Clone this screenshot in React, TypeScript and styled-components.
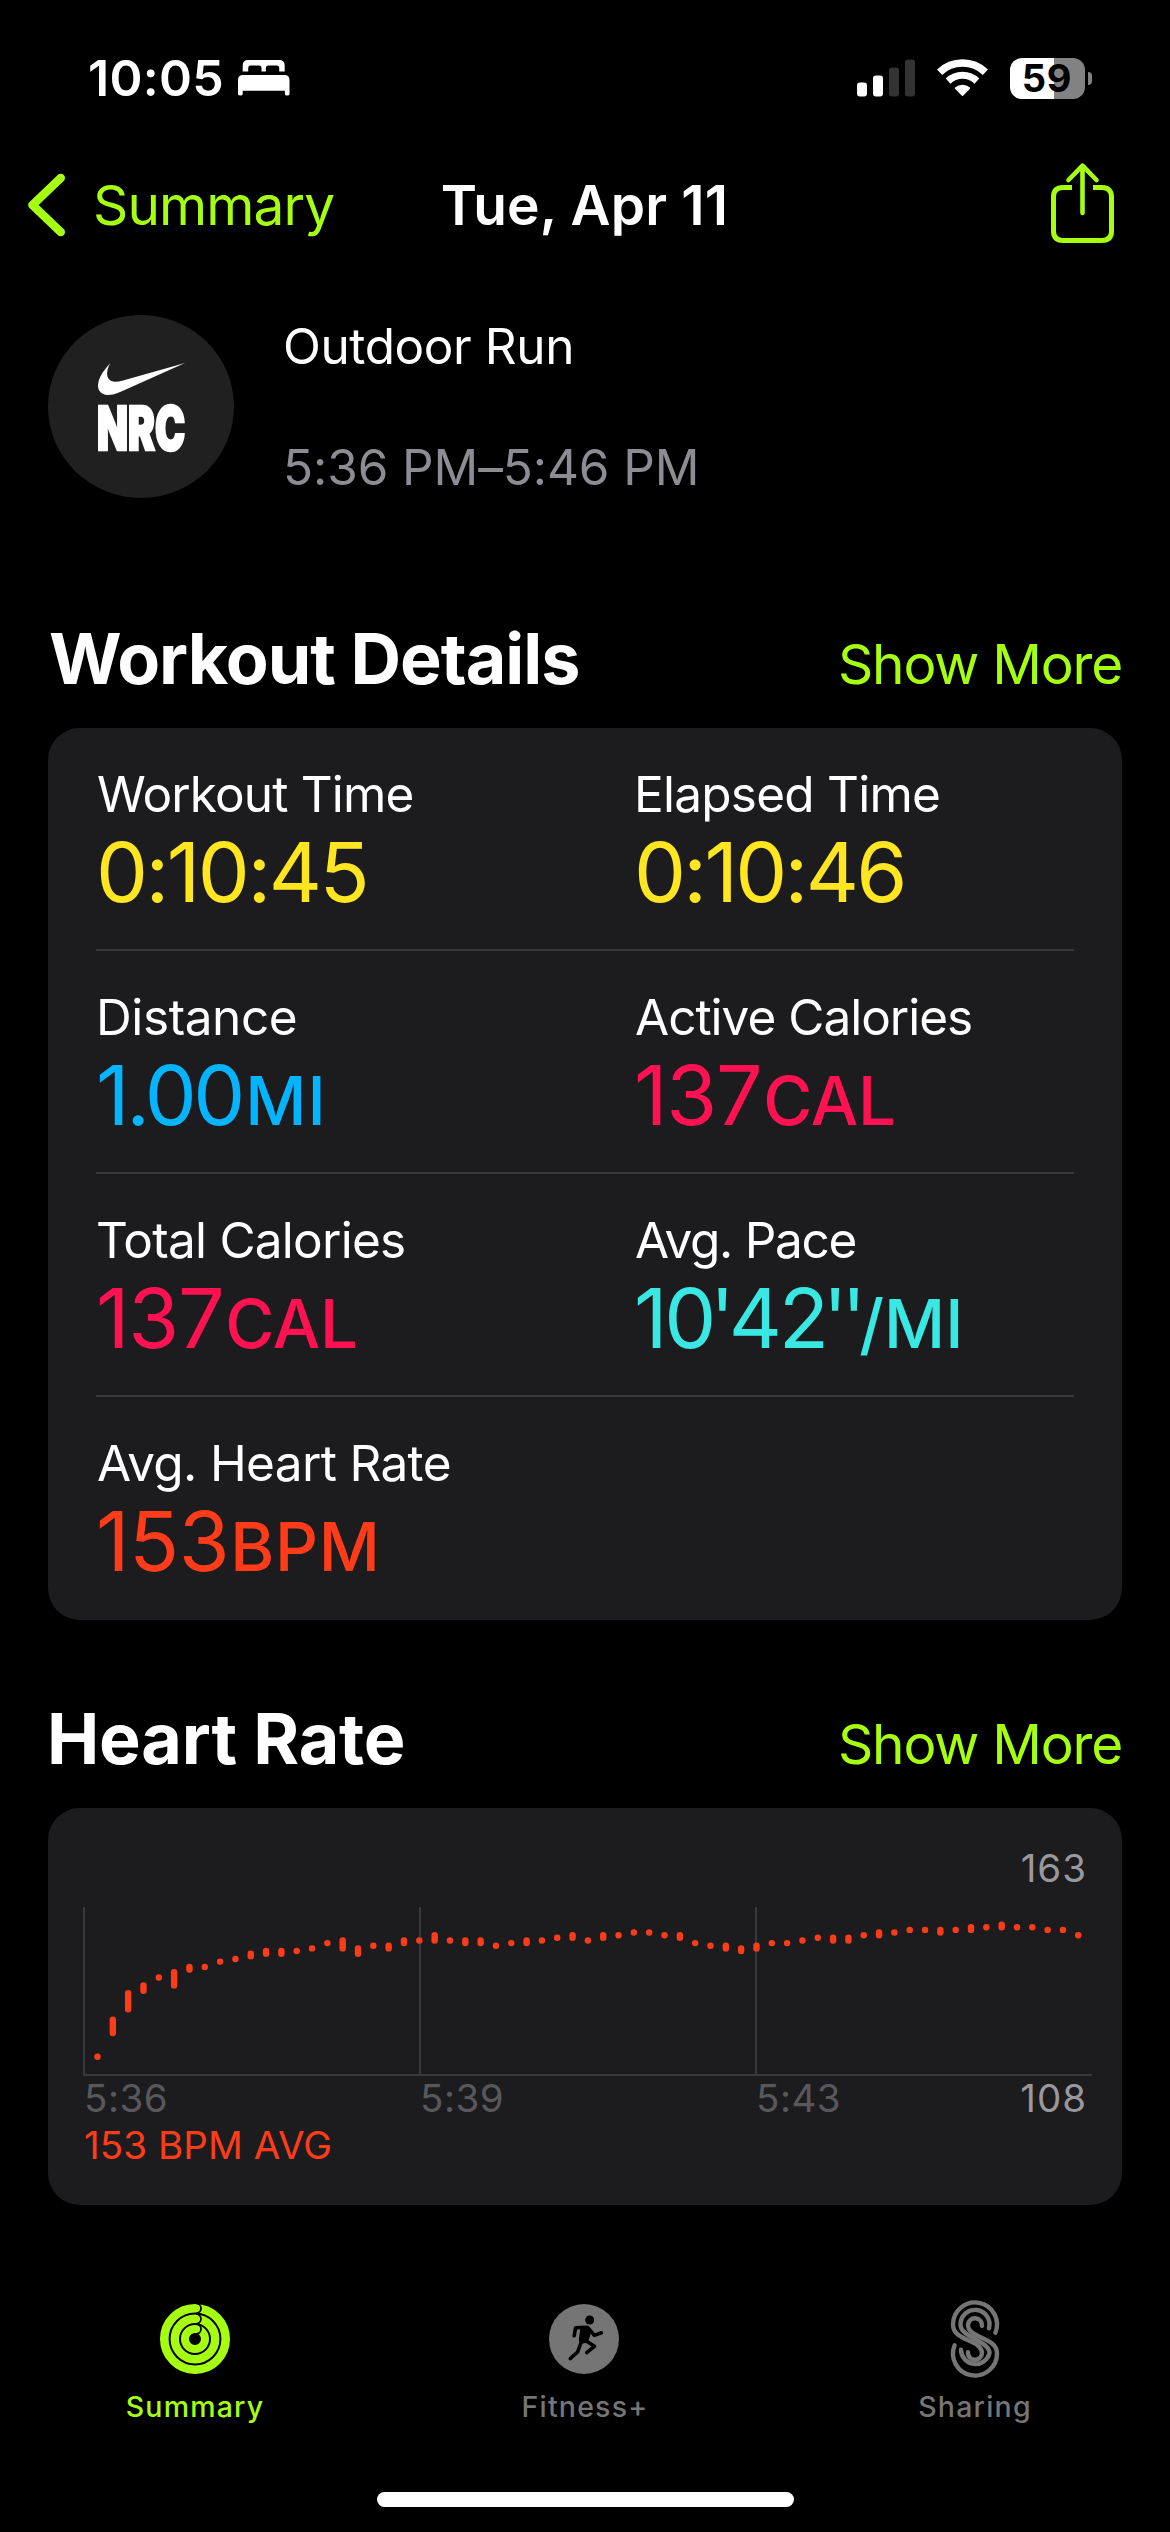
import React from "react";
import styled, { createGlobalStyle } from "styled-components";

const color = {
  accent: "#a6ff10",
  card: "#1c1c1e",
  line: "#39393b",
  yellow: "#ffe620",
  blue: "#04b4ff",
  pink: "#ff1152",
  cyan: "#39e8e2",
  red: "#ff3c1a",
  inactive: "#757575",
};

const GlobalStyle = createGlobalStyle`
  * { box-sizing: border-box; }
  body {
    margin: 0;
    background: #000;
    color: #fff;
    font-family: Inter, "Liberation Sans", sans-serif;
  }
  svg { display: block; flex: none; overflow: visible; }
`;

const Screen = styled.div`
  display: flex;
  flex-direction: column;
  width: 1170px;
  height: 2532px;
  overflow: hidden;
  background: #000;
  white-space: nowrap;
`;

/* Status bar */

const StatusBar = styled.header`
  display: flex;
  align-items: center;
  height: 156px;
  padding: 0 78px 0 88px;
`;

const Clock = styled.span`
  width: 150px;
  font-size: 50px;
  font-weight: 600;
  letter-spacing: 0.3px;
`;

const StatusIcons = styled.div`
  display: flex;
  align-items: center;
  gap: 22px;
  margin-left: auto;
`;

const Battery = styled.div`
  display: flex;
  align-items: center;
  gap: 3px;
`;

const BatteryBody = styled.div<{ $level: number }>`
  width: 75px;
  height: 41px;
  border-radius: 12px;
  background: linear-gradient(
    to right,
    #fff ${(p) => p.$level}%,
    #828282 ${(p) => p.$level}%
  );
  color: #000;
  font-size: 38px;
  font-weight: 650;
  line-height: 41px;
  letter-spacing: 0.8px;
  text-align: center;
`;

const BatteryTip = styled.div`
  width: 4.5px;
  height: 13px;
  border-radius: 0 6px 6px 0;
  background: #828282;
`;

/* Navigation bar */

const NavBar = styled.nav`
  display: grid;
  grid-template-columns: 1fr auto 1fr;
  align-items: center;
  height: 98px;
  padding: 0 56px 0 27px;
`;

const BackButton = styled.a`
  display: flex;
  align-items: center;
  gap: 28px;
  color: ${color.accent};
  font-size: 55px;
  letter-spacing: -0.9px;
`;

const NavTitle = styled.h1`
  margin: 0 0 0 28px;
  font-size: 55px;
  font-weight: 600;
  letter-spacing: 0.2px;
`;

const ShareButton = styled.a`
  justify-self: end;
`;

/* Workout summary */

const WorkoutHeader = styled.section`
  display: flex;
  gap: 49px;
  height: 183px;
  margin-top: 61px;
  padding-left: 48px;
`;

const Badge = styled.div`
  display: flex;
  flex-direction: column;
  align-items: center;
  gap: 10px;
  width: 186px;
  height: 183px;
  padding-top: 48px;
  border-radius: 50%;
  background: #202020;
`;

const WorkoutInfo = styled.div`
  display: flex;
  flex-direction: column;
  gap: 61px;
  padding-top: 1px;
  font-size: 49.5px;
  line-height: 60px;
`;

const WorkoutName = styled.span`
  letter-spacing: -0.4px;
`;

const WorkoutPeriod = styled.span`
  color: #8d8c92;
  letter-spacing: -0.1px;
`;

/* Sections */

const Section = styled.section<{ $gap: number }>`
  margin-top: ${(p) => p.$gap}px;
  padding: 0 48px;
`;

const SectionHead = styled.div`
  display: flex;
  align-items: baseline;
  justify-content: space-between;
  height: 111.5px;
`;

const SectionTitle = styled.h2<{ $tracking: number; $indent: number }>`
  margin: 0 0 0 ${(p) => p.$indent}px;
  font-size: 70px;
  font-weight: 700;
  line-height: 84px;
  letter-spacing: ${(p) => p.$tracking}px;
`;

const ShowMore = styled.a`
  color: ${color.accent};
  font-size: 55px;
  letter-spacing: -1.2px;
`;

const Card = styled.div`
  border-radius: 32px;
  background: ${color.card};
`;

const DetailsCard = styled(Card)`
  padding: 0 48px;
`;

const MetricRow = styled.div`
  display: grid;
  grid-template-columns: 538px 1fr;
  height: 223px;
  padding-top: 36px;
  border-bottom: 2px solid ${color.line};

  &:last-child {
    border-bottom: 0;
  }
`;

const MetricLabel = styled.div<{ $tracking: number; $indent: number }>`
  margin-left: ${(p) => p.$indent}px;
  font-size: 49.5px;
  line-height: 60px;
  letter-spacing: ${(p) => p.$tracking}px;
`;

const MetricValue = styled.div<{ $color: string; $tracking: number }>`
  height: 90px;
  margin-top: 3px;
  color: ${(p) => p.$color};
  font-size: 82.5px;
  font-weight: 430;
  line-height: 90px;
  letter-spacing: ${(p) => p.$tracking}px;
`;

const Unit = styled.span<{ $gap: number; $tracking: number }>`
  margin-left: ${(p) => p.$gap}px;
  font-size: 67px;
  font-weight: 480;
  letter-spacing: ${(p) => p.$tracking}px;
`;

const Prime = styled.span`
  margin: 0 0 0 -3px;
  letter-spacing: -6px;
`;

/* Heart rate chart */

const ChartCard = styled(Card)`
  height: 397px;
  padding: 37px 30px 0 36px;
  font-size: 38.5px;
  line-height: 46px;
`;

const ChartMax = styled.div`
  margin-bottom: 16px;
  padding-right: 5px;
  color: #98989d;
  text-align: right;
  letter-spacing: 1px;
`;

const AxisLabels = styled.div`
  display: grid;
  grid-template-columns: 336px 336px 1fr auto;
  padding-right: 5px;
`;

const TimeTick = styled.span`
  color: #58585b;
  letter-spacing: 0.5px;
`;

const ChartMin = styled.span`
  color: #98989d;
  letter-spacing: 1px;
`;

const ChartAverage = styled.div`
  margin-top: 1px;
  color: ${color.red};
  letter-spacing: 0.1px;
`;

/* Tab bar */

const TabBar = styled.nav`
  display: grid;
  grid-template-columns: repeat(3, 1fr);
  margin-top: 95px;
`;

const Tab = styled.a<{ $active?: boolean }>`
  display: flex;
  flex-direction: column;
  align-items: center;
  gap: 11px;
  color: ${(p) => (p.$active ? color.accent : color.inactive)};
  font-size: 28.5px;
  font-weight: 500;
  line-height: 36px;
  letter-spacing: 1.2px;
`;

const HomeIndicator = styled.div`
  width: 417px;
  height: 15px;
  margin: 67px auto 0;
  border-radius: 8px;
  background: #fff;
`;

/* Icons */

const BedIcon = () => (
  <svg width="52" height="36" viewBox="0 0 52 36" fill="#fff">
    <path d="M4.7 11.5V5.5Q4.7 0 10.2 0H41.2Q46.7 0 46.7 5.5V11.5H41.2V8.2Q41.2 5.6 38.6 5.6H30.4Q27.9 5.6 27.9 8.2V11.5H23.5V8.2Q23.5 5.6 21 5.6H12.8Q10.2 5.6 10.2 8.2V11.5Z" />
    <path d="M0 20Q0 15 5 15H46.5Q51.5 15 51.5 20V34Q51.5 35.5 49.2 35.5T46.9 34V30.8H4.7V34Q4.7 35.5 2.35 35.5T0 34Z" />
  </svg>
);

const SignalIcon = () => (
  <svg width="58" height="38" viewBox="0 0 58 38">
    <rect x="0" y="23.5" width="10" height="14" rx="3" fill="#fff" />
    <rect x="16" y="16.5" width="10" height="21" rx="3" fill="#fff" />
    <rect x="32" y="8.5" width="10" height="29" rx="3" fill="#333" />
    <rect x="48" y="0.5" width="10" height="37" rx="3" fill="#333" />
  </svg>
);

const WifiIcon = () => (
  <svg width="51" height="38" viewBox="0 0 51 38" fill="none" stroke="#fff">
    <path d="M2.6 13.2A33.2 33.2 0 0 1 48.4 13.2" strokeWidth="7.4" />
    <path d="M11.1 22.1A20.8 20.8 0 0 1 39.9 22.1" strokeWidth="7" />
    <path
      d="M25.5 36.2L18.6 29.2A10.6 10.6 0 0 1 32.4 29.2Z"
      fill="#fff"
      strokeWidth="1.6"
      strokeLinejoin="round"
    />
  </svg>
);

const ChevronIcon = () => (
  <svg width="38" height="64" viewBox="0 0 38 64" fill="none">
    <path
      d="M33.7 5L5.5 32L33.7 59"
      stroke={color.accent}
      strokeWidth="8.6"
      strokeLinecap="round"
      strokeLinejoin="round"
    />
  </svg>
);

const ShareIcon = () => (
  <svg width="64" height="84" viewBox="0 0 64 84" fill="none" stroke={color.accent}>
    <path
      d="M22 24.6H13Q3.5 24.6 3.5 34V68Q3.5 77.4 13 77.4H52Q61.5 77.4 61.5 68V34Q61.5 24.6 52 24.6H43"
      strokeWidth="5"
    />
    <path
      d="M32.5 3V50M18.5 17L32.5 2.6L46.5 17"
      strokeWidth="4.6"
      strokeLinecap="round"
      strokeLinejoin="round"
    />
  </svg>
);

const Swoosh = () => (
  <svg width="87" height="32" viewBox="0 7.8 24 8.4" preserveAspectRatio="none" fill="#fff">
    <path d="M24 7.8L6.442 15.276c-1.456.616-2.679.925-3.668.925-1.12 0-1.933-.392-2.437-1.177-.317-.504-.41-1.143-.28-1.918.13-.775.476-1.6 1.036-2.478.467-.71 1.232-1.643 2.297-2.8a6.122 6.122 0 00-.784 1.848c-.28 1.195-.028 2.072.756 2.632.373.261.886.392 1.54.392.522 0 1.11-.084 1.764-.252L24 7.8z" />
  </svg>
);

const ClubMark = () => (
  <svg width="88" height="46" viewBox="0 0 88 46">
    <text
      x="0"
      y="44.5"
      fill="#fff"
      stroke="#fff"
      strokeWidth="2.6"
      fontFamily="Inter, sans-serif"
      fontWeight="900"
      fontSize="60"
      textLength="88"
      lengthAdjust="spacingAndGlyphs"
    >
      NRC
    </text>
  </svg>
);

const rings = [
  { r: 30.7, w: 8.6 },
  { r: 20.2, w: 8.4 },
  { r: 10, w: 8 },
];

const RingsIcon = () => (
  <svg width="78" height="78" viewBox="-39 -39 78 78" fill="none">
    {rings.map(({ r, w }) => (
      <circle key={r} r={r} stroke={color.accent} strokeWidth={w} />
    ))}
    {rings.map(({ r }) => (
      <path
        key={r}
        d={`M1 ${-r - 5}A5 5 0 0 1 1 ${-r + 5}`}
        stroke="#000"
        strokeWidth="1.8"
      />
    ))}
  </svg>
);

const RunnerIcon = () => (
  <svg width="78" height="78" viewBox="-38 -39 78 78" fill="none">
    <circle r="35" fill={color.inactive} />
    <g stroke="#000" strokeWidth="3.6" strokeLinecap="round" strokeLinejoin="round">
      <circle cx="5.7" cy="-19" r="4.5" fill="#000" stroke="none" />
      <path d="M-9.8 -3.3L-8.4 -11.2L3 -11.6" />
      <path d="M4.5 -10.5L10.4 -3.6L17.4 -6.2" />
      <path d="M-1.8 -10.5L3.6 -11.2L5.4 -7.5L2.6 2L-2.6 3L-3.4 1Z" fill="#000" />
      <path d="M1 1.2L10.6 7.2L2.8 13.6" />
      <path d="M-2.6 2.5L-6.4 13L-13.8 19.6" />
    </g>
  </svg>
);

const SharingIcon = () => (
  <svg
    width="78"
    height="78"
    viewBox="-39 -39 78 78"
    fill="none"
    stroke={color.inactive}
    strokeWidth="4.4"
    strokeLinecap="round"
  >
    <path d="M20.4 -6.3A22 22 0 1 0 -22 -14.3C-22 2.5 7 0 7 14.3A7 7 0 0 1 -7 13.2" />
    <path d="M14 -10.8A14.5 14.5 0 1 0 -14.5 -14.3C-14.5 -1.5 14.5 1.5 14.5 14.3A14.5 14.5 0 0 1 -14 10.8" />
    <path d="M7 -13.2A7 7 0 0 0 -7 -14.3C-7 0 22 -2.5 22 14.3A22 22 0 1 1 -20.4 6.3" />
  </svg>
);

/* Data */

type Metric = {
  label: string;
  labelTracking: number;
  indent: number;
  value: React.ReactNode;
  tracking: number;
  color: string;
  unit?: string;
  unitGap?: number;
  unitTracking?: number;
};

const metrics: Metric[][] = [
  [
    { label: "Workout Time", labelTracking: -0.85, indent: 1, value: "0:10:45", tracking: -2.5, color: color.yellow },
    { label: "Elapsed Time", labelTracking: -0.75, indent: 0, value: "0:10:46", tracking: -2.7, color: color.yellow },
  ],
  [
    { label: "Distance", labelTracking: -0.4, indent: 0, value: "1.00", tracking: -3.3, color: color.blue, unit: "MI", unitGap: 3, unitTracking: 1.2 },
    { label: "Active Calories", labelTracking: -1, indent: 1, value: "137", tracking: -1.3, color: color.pink, unit: "CAL", unitGap: 2, unitTracking: -0.3 },
  ],
  [
    { label: "Total Calories", labelTracking: -0.75, indent: 0, value: "137", tracking: -1.3, color: color.pink, unit: "CAL", unitGap: 2, unitTracking: -0.3 },
    {
      label: "Avg. Pace",
      labelTracking: -1.3,
      indent: 1,
      value: (
        <>
          10<Prime>'</Prime>42<Prime>''</Prime>
        </>
      ),
      tracking: -3.3,
      color: color.cyan,
      unit: "/MI",
      unitGap: -1,
      unitTracking: 0,
    },
  ],
  [
    { label: "Avg. Heart Rate", labelTracking: -0.65, indent: 1, value: "153", tracking: -0.5, color: color.red, unit: "BPM", unitGap: 1, unitTracking: 0.8 },
  ],
];

/* Each sample: [highest bpm, spread in bpm] */
const samples: [number, number][] = [
  [113, 0], [127, 5], [137, 6], [140, 2], [143, 0], [145, 5], [147, 1], [147, 0],
  [149, 0], [150, 0], [152, 1], [153, 1], [153, 1], [153, 0], [154, 0], [156, 0],
  [157, 3], [154, 2], [155, 0], [155, 1], [157, 1], [157, 0], [159, 2], [157, 0],
  [157, 1], [157, 1], [155, 0], [156, 0], [157, 1], [157, 0], [158, 0], [159, 1],
  [157, 0], [159, 1], [159, 0], [160, 0], [160, 0], [159, 0], [159, 1], [156, 0],
  [155, 0], [155, 1], [154, 1], [155, 1], [156, 0], [156, 0], [157, 0], [158, 0],
  [158, 1], [158, 1], [159, 0], [160, 1], [160, 0], [161, 0], [161, 0], [161, 1],
  [161, 0], [162, 1], [162, 0], [163, 1], [162, 0], [162, 0], [161, 0], [161, 0],
  [159, 0],
];

const sampleX = (i: number) => 13.5 + i * 15.325;
const bpmY = (bpm: number) => 17.6 + (163 - bpm) * 2.643;

const HeartRateChart = () => (
  <svg width="1008" height="168" viewBox="0 0 1008 168">
    <g stroke={color.line} strokeWidth="2">
      <path d="M0 0V169M336 0V168M672 0V168M0 168H1008" />
    </g>
    <g stroke={color.red} strokeWidth="6.4" strokeLinecap="round">
      {samples.map(([high, spread], i) => (
        <path key={i} d={`M${sampleX(i)} ${bpmY(high)}V${bpmY(high - spread) + 0.01}`} />
      ))}
    </g>
  </svg>
);

export default function App() {
  return (
    <Screen>
      <GlobalStyle />
      <StatusBar>
        <Clock>10:05</Clock>
        <BedIcon />
        <StatusIcons>
          <SignalIcon />
          <WifiIcon />
          <Battery>
            <BatteryBody $level={59}>59</BatteryBody>
            <BatteryTip />
          </Battery>
        </StatusIcons>
      </StatusBar>

      <NavBar>
        <BackButton>
          <ChevronIcon />
          Summary
        </BackButton>
        <NavTitle>Tue, Apr 11</NavTitle>
        <ShareButton>
          <ShareIcon />
        </ShareButton>
      </NavBar>

      <WorkoutHeader>
        <Badge>
          <Swoosh />
          <ClubMark />
        </Badge>
        <WorkoutInfo>
          <WorkoutName>Outdoor Run</WorkoutName>
          <WorkoutPeriod>5:36 PM–5:46 PM</WorkoutPeriod>
        </WorkoutInfo>
      </WorkoutHeader>

      <Section $gap={118.5}>
        <SectionHead>
          <SectionTitle $tracking={-1} $indent={1}>Workout Details</SectionTitle>
          <ShowMore>Show More</ShowMore>
        </SectionHead>
        <DetailsCard>
          {metrics.map((row, i) => (
            <MetricRow key={i}>
              {row.map((m) => (
                <div key={m.label}>
                  <MetricLabel $tracking={m.labelTracking} $indent={m.indent}>
                    {m.label}
                  </MetricLabel>
                  <MetricValue $color={m.color} $tracking={m.tracking}>
                    {m.value}
                    {m.unit && (
                      <Unit $gap={m.unitGap ?? 0} $tracking={m.unitTracking ?? 0}>
                        {m.unit}
                      </Unit>
                    )}
                  </MetricValue>
                </div>
              ))}
            </MetricRow>
          ))}
        </DetailsCard>
      </Section>

      <Section $gap={76.5}>
        <SectionHead>
          <SectionTitle $tracking={-0.2} $indent={-1}>Heart Rate</SectionTitle>
          <ShowMore>Show More</ShowMore>
        </SectionHead>
        <ChartCard>
          <ChartMax>163</ChartMax>
          <HeartRateChart />
          <AxisLabels>
            <TimeTick>5:36</TimeTick>
            <TimeTick>5:39</TimeTick>
            <TimeTick>5:43</TimeTick>
            <ChartMin>108</ChartMin>
          </AxisLabels>
          <ChartAverage>153 BPM AVG</ChartAverage>
        </ChartCard>
      </Section>

      <TabBar>
        <Tab $active>
          <RingsIcon />
          Summary
        </Tab>
        <Tab>
          <RunnerIcon />
          Fitness+
        </Tab>
        <Tab>
          <SharingIcon />
          Sharing
        </Tab>
      </TabBar>
      <HomeIndicator />
    </Screen>
  );
}
